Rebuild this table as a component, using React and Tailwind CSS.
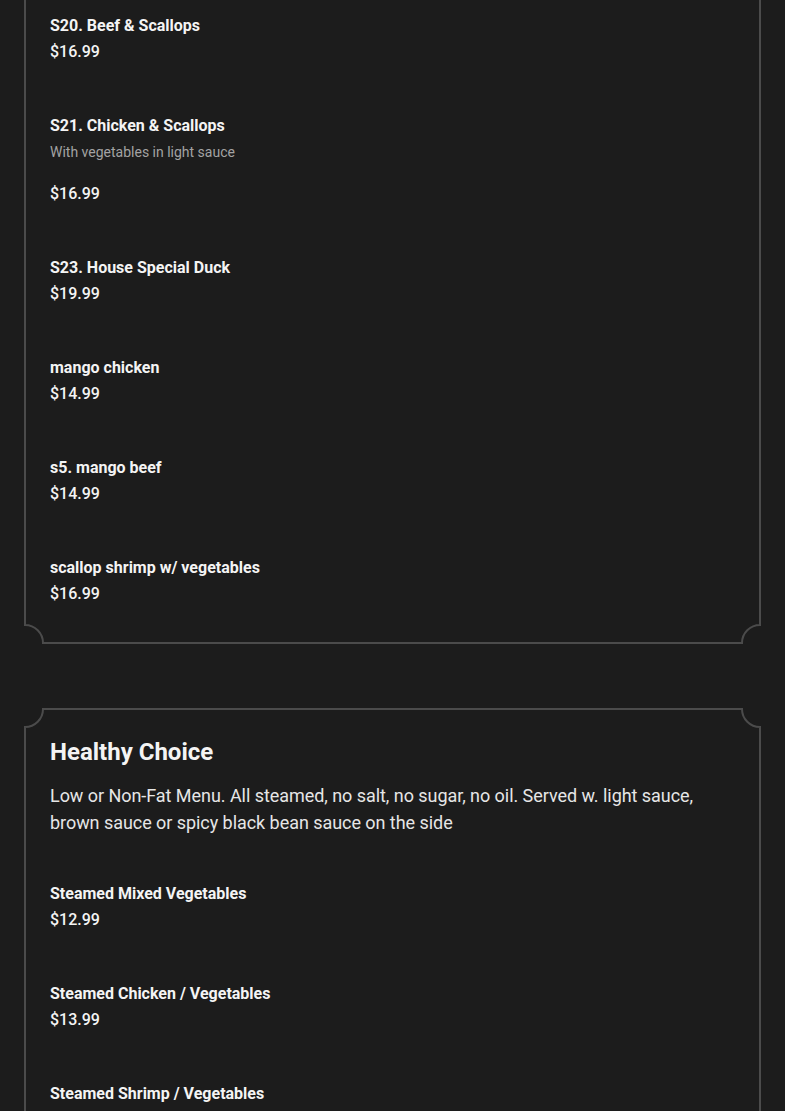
const Corner = ({ className }) => (
    <div className={`absolute w-5 h-5 bg-[#1c1c1c] ${className}`}>
        <svg width="20" height="20" viewBox="0 0 20 20" fill="none">
            <path d="M1 0 L1 1 A18 18 0 0 1 19 19 L20 19" stroke="#4b4b4b" strokeWidth="2" />
        </svg>
    </div>
);

const Item = ({ name, desc, price }) => (
    <div className="flex flex-col">
        <p className="text-base leading-[26px] font-bold text-[#f4f4f4]">{name}</p>
        {desc && <p className="text-sm leading-[26px] text-[#a3a3a3] mb-4">{desc}</p>}
        <p className="text-base leading-[26px] font-medium text-[#f4f4f4]">{price}</p>
    </div>
);

const specials = [
    { name: "S20. Beef & Scallops", price: "$16.99" },
    { name: "S21. Chicken & Scallops", desc: "With vegetables in light sauce", price: "$16.99" },
    { name: "S23. House Special Duck", price: "$19.99" },
    { name: "mango chicken", price: "$14.99" },
    { name: "s5. mango beef", price: "$14.99" },
    { name: "scallop shrimp w/ vegetables", price: "$16.99" },
];

const healthy = [
    { name: "Steamed Mixed Vegetables", price: "$12.99" },
    { name: "Steamed Chicken / Vegetables", price: "$13.99" },
    { name: "Steamed Shrimp / Vegetables", price: "$14.99" },
];

export default function App() {
    return (
        <div className="min-h-[1111px] bg-[#1c1c1c] px-6 font-['Roboto',sans-serif] overflow-hidden">
            <section className="relative border-2 border-t-0 border-[#4b4b4b] px-6 pt-[13px] pb-[35px]">
                <div className="flex flex-col gap-12">
                    {specials.map((it, i) => <Item key={i} {...it} />)}
                </div>
                <Corner className="-left-[2px] -bottom-[2px]" />
                <Corner className="-right-[2px] -bottom-[2px] -scale-x-100" />
            </section>

            <section className="relative mt-[64px] border-2 border-[#4b4b4b] px-6 pt-[26px] pb-9">
                <h2 className="text-2xl leading-8 font-bold text-[#f4f4f4]">Healthy Choice</h2>
                <p className="mt-[14px] text-lg leading-[27px] tracking-[-0.05px] text-[#e6e6e6]">
                    Low or Non-Fat Menu. All steamed, no salt, no sugar, no oil. Served w. light sauce, brown sauce or spicy black bean sauce on the side
                </p>
                <div className="mt-[45px] flex flex-col gap-12">
                    {healthy.map((it, i) => <Item key={i} {...it} />)}
                </div>
                <Corner className="-left-[2px] -top-[2px] -scale-y-100" />
                <Corner className="-right-[2px] -top-[2px] rotate-180" />
                <Corner className="-left-[2px] -bottom-[2px]" />
                <Corner className="-right-[2px] -bottom-[2px] -scale-x-100" />
            </section>
        </div>
    );
}
